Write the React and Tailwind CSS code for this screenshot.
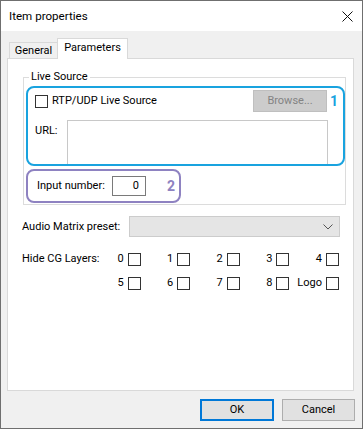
import React from 'react';

function Box() {
  return <span className="block h-[13px] w-[13px] shrink-0 border border-[#333333] bg-white" />;
}

function Layer({ label }) {
  return (
    <div className="flex items-center justify-end gap-[4px]">
      <span>{label}</span>
      <Box />
    </div>
  );
}

export default function App() {
  return (
    <div className="flex h-[429px] w-[363px] flex-col whitespace-nowrap border border-[#6f6f6f] bg-[#f0f0f0] font-['Roboto',sans-serif] text-[11px] leading-[16px] text-black">
      {/* title bar */}
      <div className="flex h-[30px] shrink-0 items-center justify-between bg-white pl-[8px] pr-[9px]">
        <span className="text-[11.6px]">Item properties</span>
        <svg width="11" height="11" viewBox="0 0 11 11">
          <path d="M0.5 0.5 L10.5 10.5 M10.5 0.5 L0.5 10.5" stroke="#111" strokeWidth="1" fill="none" />
        </svg>
      </div>

      <div className="flex flex-1 flex-col px-[6px] pt-[7px]">
        {/* tabs */}
        <div className="flex items-end pl-[2px]">
          <div className="flex h-[16px] w-[48px] items-center justify-center border-l border-t border-[#d9d9d9] bg-[#f0f0f0] pt-[1px]">
            General
          </div>
          <div className="relative z-10 -mb-px flex h-[21px] w-[71px] items-start justify-center border-x border-t border-[#d9d9d9] bg-white pt-[1px]">
            Parameters
          </div>
        </div>

        {/* panel */}
        <div className="flex h-[333px] w-[347px] flex-col border border-[#d9d9d9] bg-white pl-[14px]">
          <fieldset className="ml-[1px] mt-[10px] w-[317px] border border-[#dcdcdc] pb-[1px]">
            <legend className="ml-[5px] px-[2px] leading-[16px]">Live Source</legend>

            {/* annotation 1 */}
            <div className="ml-[2px] mt-[1px] h-[80px] w-[319px] overflow-hidden rounded-[8px] border-2 border-[#19a3df]">
              <div className="flex items-center pt-[2px] pl-[7px]">
                <div className="flex flex-1 items-center gap-[4px]">
                  <Box />
                  <span>RTP/UDP Live Source</span>
                </div>
                <div className="flex h-[22px] w-[74px] items-center justify-center border border-[#bfbfbf] bg-[#cccccc] text-[#838383]">
                  Browse...
                </div>
                <span className="ml-[3px] w-[13px] text-[14px] font-bold text-[#19a3df]">1</span>
              </div>
              <div className="mt-[8px] flex pl-[7px]">
                <span className="w-[32px] pt-[3px]">URL:</span>
                <div className="h-[60px] w-[261px] border border-[#c8c8c8] bg-white" />
              </div>
            </div>

            {/* annotation 2 */}
            <div className="ml-[2px] mt-[3px] flex h-[34px] w-[155px] items-center rounded-[8px] border-2 border-[#8e82c1] pl-[9px]">
              <span className="w-[75px]">Input number:</span>
              <div className="flex h-[20px] w-[34px] items-center justify-end border border-[#7a7a7a] pr-[6px]">0</div>
              <span className="ml-[21px] text-[14px] font-bold text-[#8e82c1]">2</span>
            </div>
          </fieldset>

          {/* audio matrix */}
          <div className="mt-[11px] flex items-center">
            <span className="w-[107px]">Audio Matrix preset:</span>
            <div className="flex h-[21px] w-[211px] items-center justify-end border border-[#cccccc] bg-[#e5e5e5] pr-[6px]">
              <svg width="10" height="6" viewBox="0 0 10 6">
                <path d="M0.5 0.5 L5 5 L9.5 0.5" stroke="#555" strokeWidth="1" fill="none" />
              </svg>
            </div>
          </div>

          {/* hide cg layers */}
          <div className="mt-[10px] flex">
            <span className="w-[69px] pt-[4px]">Hide CG Layers:</span>
            <div className="grid w-[248px] grid-cols-5 auto-rows-[24px] items-center">
              <Layer label="0" />
              <Layer label="1" />
              <Layer label="2" />
              <Layer label="3" />
              <Layer label="4" />
              <Layer label="5" />
              <Layer label="6" />
              <Layer label="7" />
              <Layer label="8" />
              <Layer label="Logo" />
            </div>
          </div>
        </div>

        {/* buttons */}
        <div className="mt-[8px] flex justify-end gap-[8px] pr-[1px]">
          <button className="flex h-[22px] w-[74px] items-center justify-center border-2 border-[#0078d7] bg-[#e1e1e1]">
            OK
          </button>
          <button className="flex h-[22px] w-[73px] items-center justify-center border border-[#adadad] bg-[#e1e1e1]">
            Cancel
          </button>
        </div>
      </div>
    </div>
  );
}
